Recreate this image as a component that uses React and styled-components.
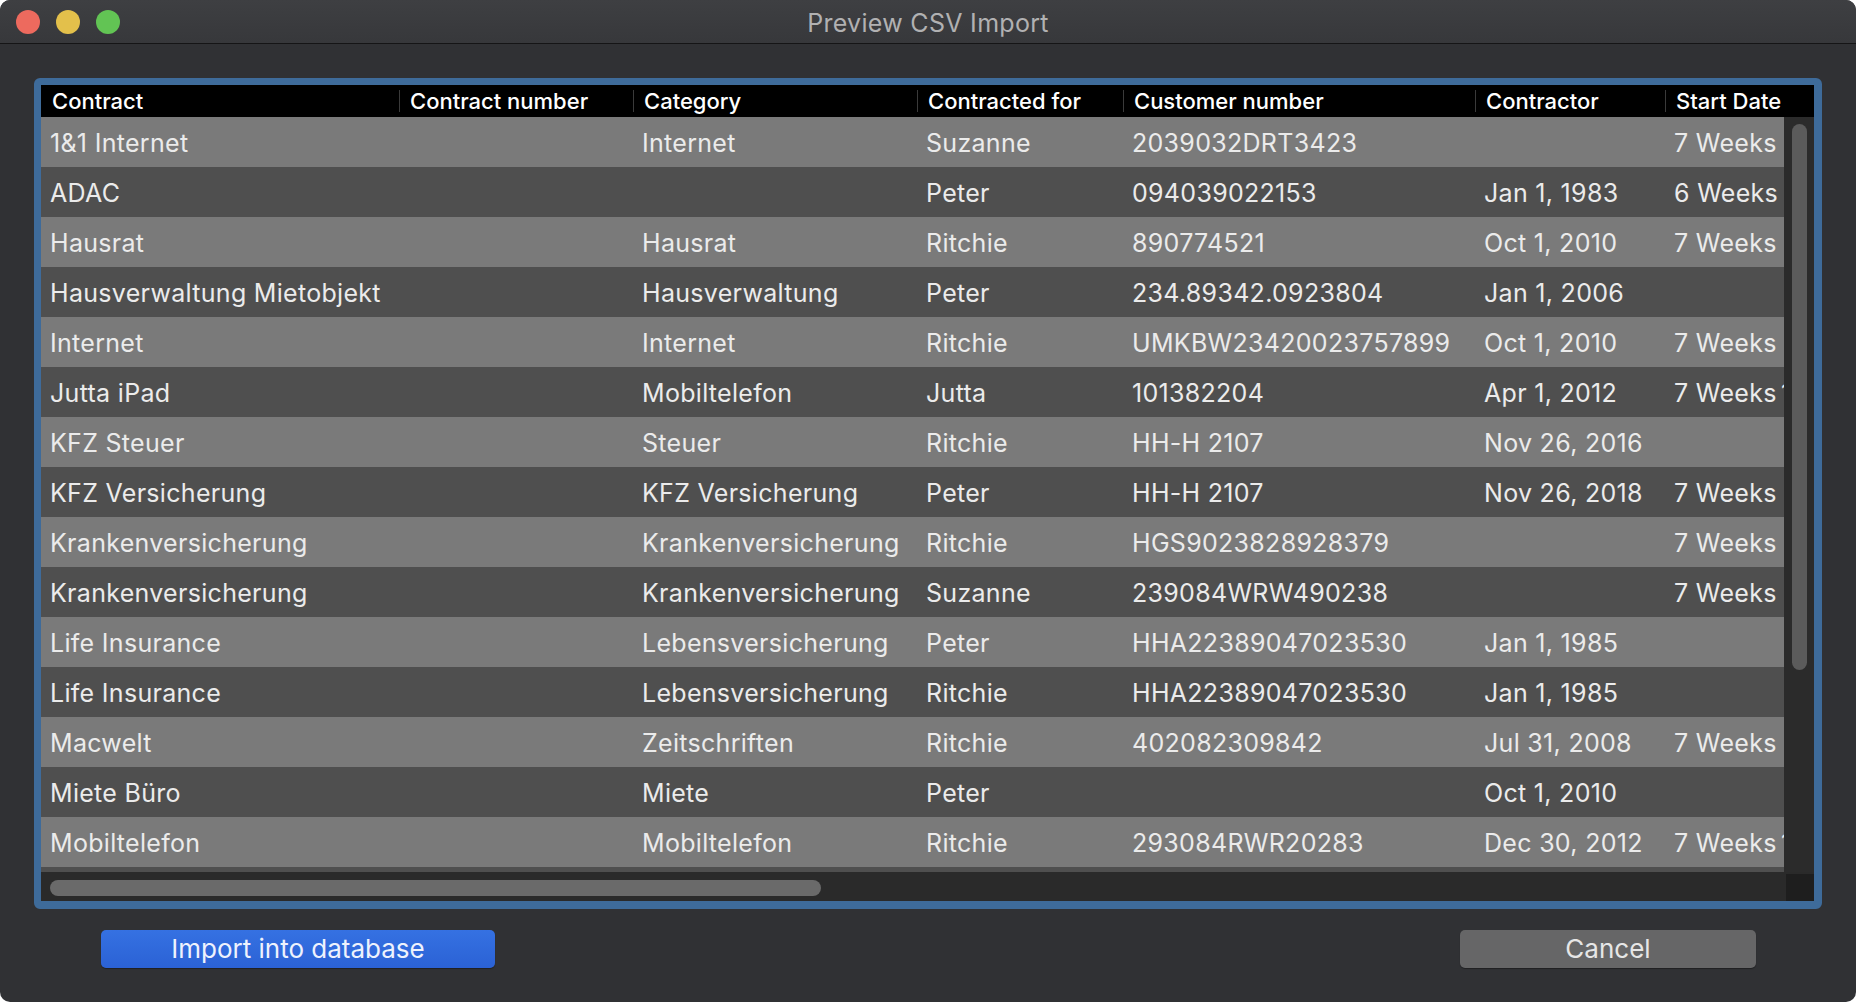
import React from 'react';
import styled, { createGlobalStyle } from 'styled-components';

const GlobalStyle = createGlobalStyle`
  html, body {
    margin: 0;
    padding: 0;
    background: #ffffff;
  }
  body {
    font-family: Inter, "Noto Sans", "Liberation Sans", sans-serif;
    -webkit-font-smoothing: antialiased;
  }
  * { box-sizing: border-box; }
`;

const COLS = '358px 234px 284px 206px 352px 190px 109px 1fr';

const Window = styled.div`
  width: 1856px;
  height: 1002px;
  background: #303134;
  border-radius: 10px;
  overflow: hidden;
  display: flex;
  flex-direction: column;
`;

const TitleBar = styled.div`
  height: 44px;
  flex: none;
  display: grid;
  grid-template-columns: 1fr auto 1fr;
  align-items: center;
  background: linear-gradient(#3e3f42, #37383b);
  border-bottom: 1px solid #151516;
  padding: 0 16px;
`;

const Lights = styled.div`
  display: flex;
  gap: 16px;
`;

const Light = styled.span`
  width: 24px;
  height: 24px;
  border-radius: 50%;
  background: ${p => p.$color};
`;

const Title = styled.div`
  font-size: 25px;
  color: #b1b1b2;
  letter-spacing: 0.3px;
  padding-top: 2px;
`;

const Content = styled.div`
  flex: 1;
  display: flex;
  flex-direction: column;
  padding: 34px 34px 0 34px;
`;

const FocusRing = styled.div`
  height: 831px;
  border: 7px solid #3e6b9a;
  border-right-width: 8px;
  border-bottom-width: 8px;
  border-radius: 6px;
`;

const TableGrid = styled.div`
  height: 100%;
  display: grid;
  grid-template-columns: 1fr 30px;
  grid-template-rows: 32px 755px 29px;
  background: #2a2a2a;
`;

const Header = styled.div`
  grid-column: 1 / -1;
  background: #000;
  display: grid;
  grid-template-columns: ${COLS};
  align-items: center;
`;

const HeaderCell = styled.div`
  height: 100%;
  display: flex;
  align-items: center;
  padding-left: 11px;
  font-size: 22px;
  font-weight: 500;
  color: #ffffff;
  white-space: nowrap;
  background: ${p =>
    p.$sep ? 'linear-gradient(#3a3a3a, #3a3a3a) left center / 1px 22px no-repeat' : 'none'};
`;

const Body = styled.div`
  overflow: hidden;
`;

const Row = styled.div`
  height: 50px;
  display: grid;
  grid-template-columns: ${COLS};
  align-items: center;
  background: ${p => (p.$odd ? '#7a7a7a' : '#4f4f4f')};
  overflow: hidden;
`;

const Cell = styled.div`
  padding: 2px 0 0 ${p => (p.$edge ? 7 : 9)}px;
  font-size: 25px;
  letter-spacing: 0.3px;
  color: #ebebeb;
  white-space: nowrap;
`;

const VScroll = styled.div`
  background: #2b2b2b;
  padding: 7px 7px 0 8px;
`;

const VThumb = styled.div`
  width: 15px;
  height: 546px;
  border-radius: 8px;
  background: #5b5b5b;
`;

const HScroll = styled.div`
  background: #2a2a2a;
  padding: 8px 0 0 9px;
`;

const HThumb = styled.div`
  width: 771px;
  height: 16px;
  border-radius: 8px;
  background: #6a6a6a;
`;

const Corner = styled.div`
  background: #1e1e1e;
  border-top: 2px solid #2a2a2a;
  border-left: 2px solid #2a2a2a;
`;

const ButtonRow = styled.div`
  margin-top: 21px;
  display: flex;
  justify-content: space-between;
  padding: 0 66px 0 67px;
`;

const Button = styled.button`
  height: 38px;
  width: ${p => p.$width}px;
  border: none;
  border-radius: 5px;
  font-family: inherit;
  font-size: 26px;
  color: ${p => (p.$primary ? '#eef2fd' : '#e6e6e6')};
  background: ${p => (p.$primary ? 'linear-gradient(#3571e2, #2b62d5)' : '#666667')};
  box-shadow: 0 1px 1px rgba(0, 0, 0, 0.35);
  display: flex;
  align-items: center;
  justify-content: center;
  padding: 0 0 2px;
`;

const headers = ['Contract', 'Contract number', 'Category', 'Contracted for', 'Customer number', 'Contractor', 'Start Date', ''];

const rows = [
  ['1&1 Internet', '', 'Internet', 'Suzanne', '2039032DRT3423', '', '7 Weeks', ''],
  ['ADAC', '', '', 'Peter', '094039022153', 'Jan 1, 1983', '6 Weeks', ''],
  ['Hausrat', '', 'Hausrat', 'Ritchie', '890774521', 'Oct 1, 2010', '7 Weeks', ''],
  ['Hausverwaltung Mietobjekt', '', 'Hausverwaltung', 'Peter', '234.89342.0923804', 'Jan 1, 2006', '', ''],
  ['Internet', '', 'Internet', 'Ritchie', 'UMKBW23420023757899', 'Oct 1, 2010', '7 Weeks', ''],
  ['Jutta iPad', '', 'Mobiltelefon', 'Jutta', '101382204', 'Apr 1, 2012', '7 Weeks', '1 Month'],
  ['KFZ Steuer', '', 'Steuer', 'Ritchie', 'HH-H 2107', 'Nov 26, 2016', '', ''],
  ['KFZ Versicherung', '', 'KFZ Versicherung', 'Peter', 'HH-H 2107', 'Nov 26, 2018', '7 Weeks', ''],
  ['Krankenversicherung', '', 'Krankenversicherung', 'Ritchie', 'HGS9023828928379', '', '7 Weeks', ''],
  ['Krankenversicherung', '', 'Krankenversicherung', 'Suzanne', '239084WRW490238', '', '7 Weeks', ''],
  ['Life Insurance', '', 'Lebensversicherung', 'Peter', 'HHA22389047023530', 'Jan 1, 1985', '', ''],
  ['Life Insurance', '', 'Lebensversicherung', 'Ritchie', 'HHA22389047023530', 'Jan 1, 1985', '', ''],
  ['Macwelt', '', 'Zeitschriften', 'Ritchie', '402082309842', 'Jul 31, 2008', '7 Weeks', ''],
  ['Miete Büro', '', 'Miete', 'Peter', '', 'Oct 1, 2010', '', ''],
  ['Mobiltelefon', '', 'Mobiltelefon', 'Ritchie', '293084RWR20283', 'Dec 30, 2012', '7 Weeks', '1 Month'],
  ['', '', '', '', '', '', '', ''],
];

const App = () => {
  return (
    <>
      <GlobalStyle />
      <Window>
        <TitleBar>
          <Lights>
            <Light $color="#ed6a5e" />
            <Light $color="#e3c04b" />
            <Light $color="#62c454" />
          </Lights>
          <Title>Preview CSV Import</Title>
          <span />
        </TitleBar>
        <Content>
          <FocusRing>
            <TableGrid>
              <Header>
                {headers.map((h, i) => (
                  <HeaderCell key={i} $sep={i > 0 && i < 7}>{h}</HeaderCell>
                ))}
              </Header>
              <Body>
                {rows.map((r, i) => (
                  <Row key={i} $odd={i % 2 === 0}>
                    {r.map((c, j) => (
                      <Cell key={j} $edge={j === 7}>{c}</Cell>
                    ))}
                  </Row>
                ))}
              </Body>
              <VScroll>
                <VThumb />
              </VScroll>
              <HScroll>
                <HThumb />
              </HScroll>
              <Corner />
            </TableGrid>
          </FocusRing>
          <ButtonRow>
            <Button $primary $width={394}>Import into database</Button>
            <Button $width={296}>Cancel</Button>
          </ButtonRow>
        </Content>
      </Window>
    </>
  );
};

export default App;
